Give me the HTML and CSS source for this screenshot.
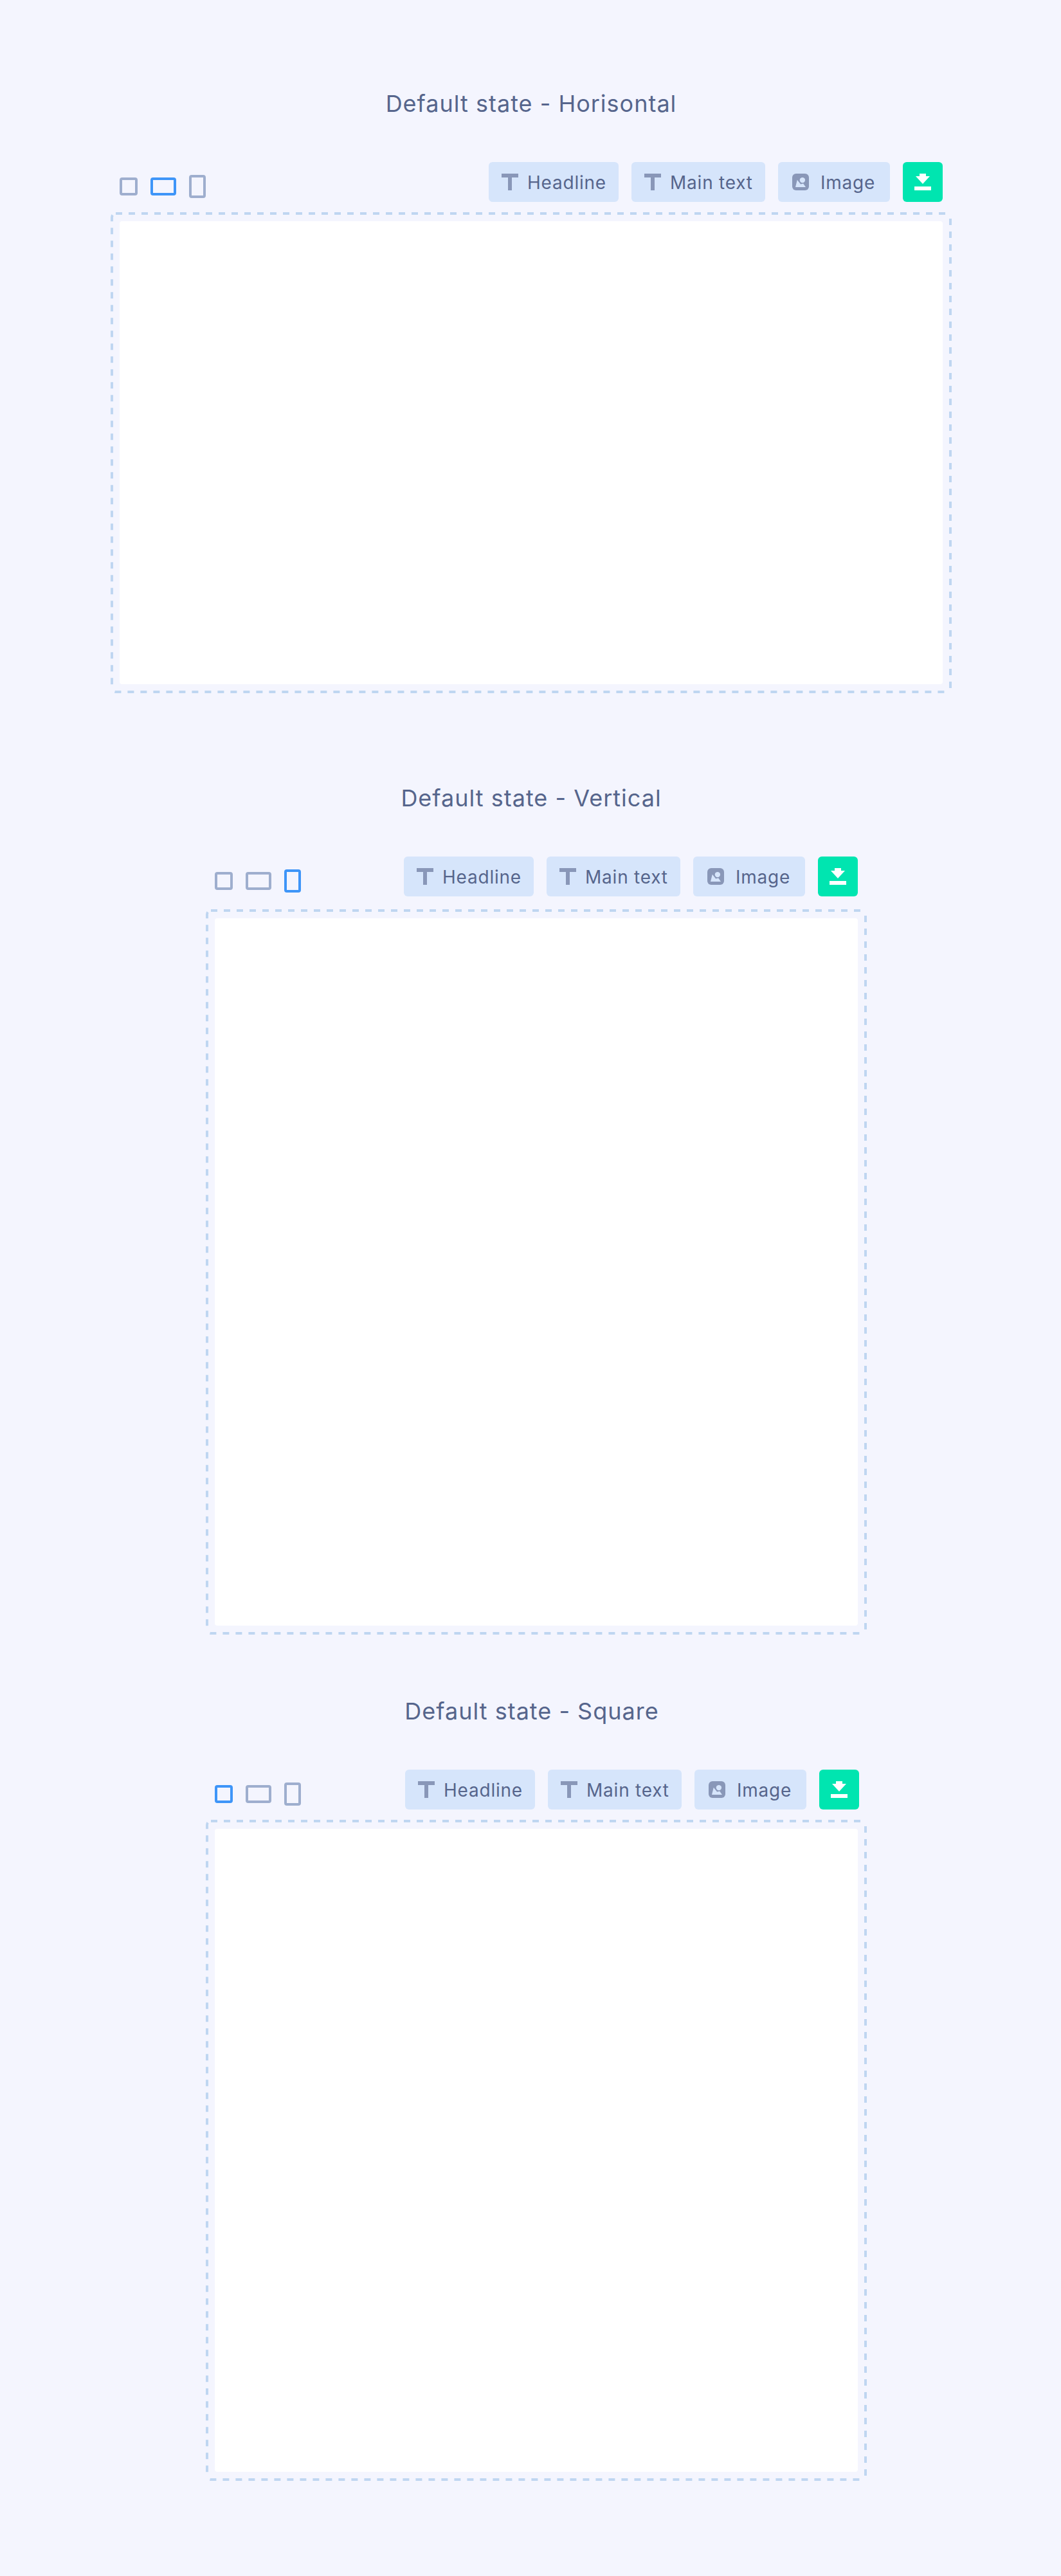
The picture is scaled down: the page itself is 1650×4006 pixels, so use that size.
FILE: index.html
```html
<!DOCTYPE html>
<html lang="en">
<head>
<meta charset="utf-8">
<title>Canvas editor – default states</title>
<link rel="stylesheet" href="styles.css">
</head>
<body>
<svg class="defs" width="0" height="0" aria-hidden="true">
  <symbol id="icon-type" viewBox="0 0 26 26"><path d="M0 0H26V6H16V26H10V6H0Z" fill="#8997b8"/></symbol>
  <symbol id="icon-image" viewBox="0 0 26 26">
    <rect width="26" height="26" rx="6" fill="#8997b8"/>
    <circle cx="15.9" cy="10.1" r="4.2" fill="#d6e5fb"/>
    <path d="M5 21L7.8 9.8L13.1 16.4L17.2 15.4L21 21Z" fill="#d6e5fb"/>
  </symbol>
  <symbol id="icon-download" viewBox="0 0 26 26"><path d="M8 0H18V4H24L13 16L2 4H8ZM0 20H26V26H0Z" fill="#fff"/></symbol>
</svg>

<main>
  <section class="board board-horizontal">
    <h2 class="title">Default state - Horisontal</h2>
    <div class="workspace">
      <div class="toolbar">
        <div class="formats">
          <span class="format square"></span>
          <span class="format landscape active"></span>
          <span class="format portrait"></span>
        </div>
        <div class="actions">
          <button class="btn headline"><svg class="icon"><use href="#icon-type"/></svg><span class="label">Headline</span></button>
          <button class="btn main-text"><svg class="icon"><use href="#icon-type"/></svg><span class="label">Main text</span></button>
          <button class="btn image"><svg class="icon"><use href="#icon-image"/></svg><span class="label">Image</span></button>
          <button class="btn download" aria-label="Download"><svg class="icon"><use href="#icon-download"/></svg></button>
        </div>
      </div>
      <div class="frame">
        <svg class="outline" viewBox="0 0 1308 748">
          <path d="M8 2H1302"/>
          <path d="M1306 10V742"/>
          <path d="M1296.4 746H8A6 6 0 0 1 2 740"/>
          <path d="M2 734.3V8A6 6 0 0 1 8 2"/>
        </svg>
        <div class="canvas"></div>
      </div>
    </div>
  </section>

  <section class="board board-vertical">
    <h2 class="title">Default state - Vertical</h2>
    <div class="workspace">
      <div class="toolbar">
        <div class="formats">
          <span class="format square"></span>
          <span class="format landscape"></span>
          <span class="format portrait active"></span>
        </div>
        <div class="actions">
          <button class="btn headline"><svg class="icon"><use href="#icon-type"/></svg><span class="label">Headline</span></button>
          <button class="btn main-text"><svg class="icon"><use href="#icon-type"/></svg><span class="label">Main text</span></button>
          <button class="btn image"><svg class="icon"><use href="#icon-image"/></svg><span class="label">Image</span></button>
          <button class="btn download" aria-label="Download"><svg class="icon"><use href="#icon-download"/></svg></button>
        </div>
      </div>
      <div class="frame">
        <svg class="outline" viewBox="0 0 1028 1128">
          <path d="M8 2H1022"/>
          <path d="M1026 10V1122"/>
          <path d="M1016.4 1126H8A6 6 0 0 1 2 1120"/>
          <path d="M2 1114.3V8A6 6 0 0 1 8 2"/>
        </svg>
        <div class="canvas"></div>
      </div>
    </div>
  </section>

  <section class="board board-square">
    <h2 class="title">Default state - Square</h2>
    <div class="workspace">
      <div class="toolbar">
        <div class="formats">
          <span class="format square active"></span>
          <span class="format landscape"></span>
          <span class="format portrait"></span>
        </div>
        <div class="actions">
          <button class="btn headline"><svg class="icon"><use href="#icon-type"/></svg><span class="label">Headline</span></button>
          <button class="btn main-text"><svg class="icon"><use href="#icon-type"/></svg><span class="label">Main text</span></button>
          <button class="btn image"><svg class="icon"><use href="#icon-image"/></svg><span class="label">Image</span></button>
          <button class="btn download" aria-label="Download"><svg class="icon"><use href="#icon-download"/></svg></button>
        </div>
      </div>
      <div class="frame">
        <svg class="outline" viewBox="0 0 1028 1028">
          <path d="M8 2H1022"/>
          <path d="M1026 10V1022"/>
          <path d="M1016.4 1026H8A6 6 0 0 1 2 1020"/>
          <path d="M2 1014.3V8A6 6 0 0 1 8 2"/>
        </svg>
        <div class="canvas"></div>
      </div>
    </div>
  </section>
</main>
</body>
</html>
```
FILE: styles.css
```css
* {
  box-sizing: border-box;
}

body {
  margin: 0;
  background: #f4f5fe;
  color: #56658c;
  font-family: Inter, "Liberation Sans", sans-serif;
}

.defs {
  display: block;
}

main {
  min-height: 4006px;
}

.board-horizontal {
  padding-top: 139px;
}

.board-vertical {
  padding-top: 141px;
}

.board-square {
  padding-top: 97px;
}

.title {
  margin: 0 0 69px;
  padding-left: 2px;
  font-size: 36px;
  font-weight: 400;
  line-height: 44px;
  letter-spacing: 1px;
  text-align: center;
}

.board-square .title {
  padding-left: 4px;
}

.workspace {
  display: flex;
  flex-direction: column;
  gap: 16px;
  width: 1028px;
  margin-left: 320px;
}

.board-horizontal .workspace {
  width: 1308px;
  margin-left: 172px;
}

.board-vertical .workspace {
  gap: 20px;
}

.toolbar {
  display: flex;
  justify-content: space-between;
  height: 62px;
  padding: 0 14px;
}

.board-square .toolbar {
  padding-right: 12px;
}

.formats {
  display: flex;
  align-items: center;
  gap: 20px;
  padding-top: 14px;
}

.format {
  border: 4px solid #9eaece;
  border-radius: 4px;
}

.format.active {
  border-color: #3e95f8;
}

.square {
  width: 28px;
  height: 28px;
}

.landscape {
  width: 40px;
  height: 28px;
}

.portrait {
  width: 26px;
  height: 36px;
}

.actions {
  display: flex;
  gap: 20px;
}

.btn {
  display: flex;
  align-items: flex-start;
  gap: 14px;
  height: 62px;
  padding: 18px 0 0 20px;
  border: 0;
  border-radius: 6px;
  background: #d6e5fb;
  color: inherit;
  font: 400 28px/34px Inter, "Liberation Sans", sans-serif;
  letter-spacing: 0.78px;
  white-space: nowrap;
}

.label {
  margin-top: -3px;
}

.headline {
  width: 202px;
}

.main-text {
  width: 208px;
}

.image {
  width: 174px;
  gap: 18px;
  padding-left: 22px;
}

.download {
  width: 62px;
  padding-left: 18px;
  background: #00e5b0;
}

.icon {
  display: block;
  flex: none;
  width: 26px;
  height: 26px;
}

.frame {
  position: relative;
  padding: 14px;
}

.outline {
  position: absolute;
  inset: 0;
  width: 100%;
  height: 100%;
  fill: none;
  stroke: #bfd6f1;
  stroke-width: 4px;
  stroke-dasharray: 10 10;
}

.canvas {
  height: 1000px;
  border-radius: 4px;
  background: #fff;
}

.board-horizontal .canvas {
  height: 720px;
}

.board-vertical .canvas {
  height: 1100px;
}
```
